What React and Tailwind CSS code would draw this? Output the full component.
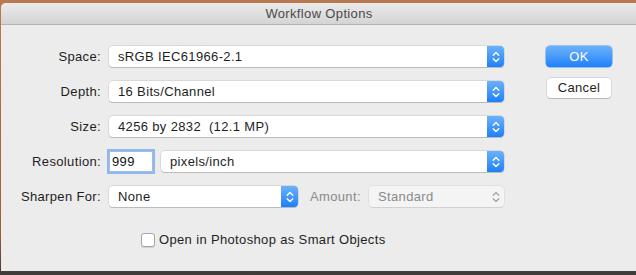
import React from 'react';

const Chevrons = ({ color = 'white' }) => (
  <svg width="8" height="12" viewBox="0 0 8 12" fill="none" stroke={color} strokeWidth="1.4" strokeLinecap="round" strokeLinejoin="round">
    <path d="M1.2 4.2L4 1.4l2.8 2.8" />
    <path d="M1.2 7.8L4 10.6l2.8-2.8" />
  </svg>
);

const Popup = ({ value, className = '' }) => (
  <div className={`flex h-[21px] items-stretch rounded-[4px] bg-white shadow-[0_0_0_0.5px_#c4c4c4,0_1px_0_0_#b2b2b2] ${className}`}>
    <div className="flex flex-1 items-center pl-[9px] text-[13px] leading-none text-[#1e1e1e]">{value}</div>
    <div className="flex w-[17px] items-center justify-center rounded-r-[4px] bg-gradient-to-b from-[#69b1fa] to-[#1a7ffa]">
      <Chevrons />
    </div>
  </div>
);

const Label = ({ children }) => (
  <div className="w-[100px] shrink-0 text-right text-[13px] text-[#1e1e1e]">{children}</div>
);

export default function App() {
  return (
    <div
      className="h-[275px] w-[636px] overflow-hidden bg-[linear-gradient(180deg,#b97a50_0%,#9c5e38_85%,#3c3a38_100%)] pl-px pt-[3px] tracking-[0.35px]"
      style={{ fontFamily: '"Liberation Sans", Arial, sans-serif' }}
    >
      <div className="h-[268px] w-[660px] overflow-hidden rounded-t-[5px] bg-[#ececec]">
        {/* Title bar */}
        <div className="flex h-[22px] items-center justify-center border-b border-[#b3b3b3] bg-gradient-to-b from-[#ebebeb] to-[#d4d4d4] pr-[24px] text-[13px] text-[#4a4a4a]">
          Workflow Options
        </div>

        <div className="flex pt-[21px]">
          {/* Form */}
          <div className="flex w-[503px] flex-col gap-[14px]">
            <div className="flex items-center gap-[8px]">
              <Label>Space:</Label>
              <Popup value="sRGB IEC61966-2.1" className="w-[395px]" />
            </div>
            <div className="flex items-center gap-[8px]">
              <Label>Depth:</Label>
              <Popup value="16 Bits/Channel" className="w-[395px]" />
            </div>
            <div className="flex items-center gap-[8px]">
              <Label>Size:</Label>
              <Popup value="4256 by 2832  (12.1 MP)" className="w-[395px] whitespace-pre" />
            </div>
            <div className="flex items-center">
              <Label>Resolution:</Label>
              <div className="ml-[8px] flex h-[21px] w-[44px] items-center border border-[#9bbfe9] bg-white pl-[2px] text-[13px] text-[#111] shadow-[0_0_0_2px_#8fb9ee]">
                999
              </div>
              <Popup value="pixels/inch" className="ml-[8px] w-[343px]" />
            </div>
            <div className="flex items-center">
              <Label>Sharpen For:</Label>
              <Popup value="None" className="ml-[8px] w-[189px]" />
              <div className="ml-[12px] text-[13px] text-[#8a8a8a]">Amount:</div>
              <div className="ml-auto flex h-[21px] w-[135px] items-center rounded-[4px] bg-[#f4f4f4] shadow-[0_0_0_0.5px_#d4d4d4,0_1px_0_0_#cfcfcf]">
                <div className="flex-1 pl-[9px] text-[13px] text-[#8a8a8a]">Standard</div>
                <div className="flex w-[17px] items-center justify-center">
                  <Chevrons color="#a8a8a8" />
                </div>
              </div>
            </div>
            <div className="mt-[9px] flex items-center pl-[140px]">
              <div className="h-[14px] w-[14px] rounded-[3px] border border-[#a7a7a7] bg-white shadow-[0_1px_0_0_#d0d0d0]" />
              <span className="ml-[4px] text-[13px] text-[#1e1e1e]">Open in Photoshop as Smart Objects</span>
            </div>
          </div>

          {/* Buttons */}
          <div className="ml-[42px] flex flex-col gap-[11px]">
            <button className="flex h-[21px] w-[66px] items-center justify-center rounded-[4px] bg-gradient-to-b from-[#6bb2fa] to-[#1a80fa] text-[13px] text-white shadow-[0_0_0_0.5px_#4a94f0]">
              OK
            </button>
            <button className="ml-px flex h-[20px] w-[64px] items-center justify-center rounded-[4px] bg-white text-[13px] text-[#1e1e1e] shadow-[0_0_0_0.5px_#c2c2c2,0_1px_0_0_#b0b0b0]">
              Cancel
            </button>
          </div>
        </div>
      </div>
    </div>
  );
}
